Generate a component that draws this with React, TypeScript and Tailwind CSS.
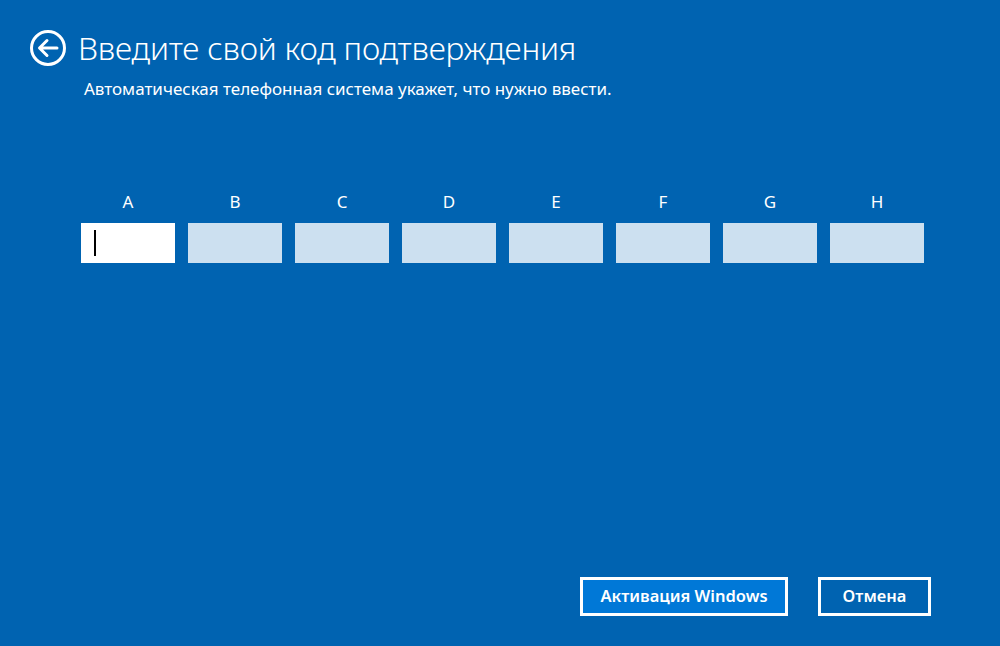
import { useState } from "react";

const letters = ["A", "B", "C", "D", "E", "F", "G", "H"];

function BackIcon() {
  return (
    <svg width="38" height="38" viewBox="0 0 38 38" fill="none" stroke="white" strokeWidth="3">
      <circle cx="19" cy="19" r="16.5" />
      <path d="M28 19H11M18 11.5L10.5 19L18 26.5" strokeLinecap="round" strokeLinejoin="round" />
    </svg>
  );
}

export default function App() {
  const [values, setValues] = useState<string[]>(letters.map(() => ""));

  return (
    <div className="flex h-[646px] w-[1000px] flex-col bg-[#0063b1] font-['Noto_Sans','Open_Sans',sans-serif] text-white">
      <div className="flex items-center gap-[11px] pl-[29px] pt-[28px]">
        <BackIcon />
        <h1 className="text-[31.7px] font-light leading-[40px] tracking-[-0.2px]">Введите свой код подтверждения</h1>
      </div>
      <p className="mt-[11px] pl-[84px] text-[17px] leading-[20px]">
        Автоматическая телефонная система укажет, что нужно ввести.
      </p>

      <div className="mt-[91px] flex gap-[13px] pl-[81px]">
        {letters.map((letter, i) => (
          <div key={letter} className="flex w-[94px] flex-col items-center">
            <span className="text-[17px] leading-[24px]">{letter}</span>
            <div className="relative mt-[9px]">
              <input
                value={values[i]}
                onChange={(e) => setValues((prev) => prev.map((v, j) => (j === i ? e.target.value : v)))}
                className={`h-[40px] w-[94px] px-[12px] text-[17px] text-black caret-black outline-none ${
                  i === 0 ? "bg-white" : "bg-[#cce0f0]"
                }`}
              />
              {i === 0 && values[0] === "" && (
                <span className="pointer-events-none absolute left-[13px] top-[7px] h-[26px] w-[2px] bg-black" />
              )}
            </div>
          </div>
        ))}
      </div>

      <div className="mt-auto flex justify-end gap-[30px] pb-[30px] pr-[69px]">
        <button
          type="button"
          className="h-[39px] w-[208px] border-[3px] border-white bg-[#0078d7] text-[16.5px] font-semibold"
        >
          Активация Windows
        </button>
        <button
          type="button"
          className="h-[39px] w-[113px] border-[3px] border-white bg-[#0063b1] text-[16.5px] font-semibold"
        >
          Отмена
        </button>
      </div>
    </div>
  );
}
